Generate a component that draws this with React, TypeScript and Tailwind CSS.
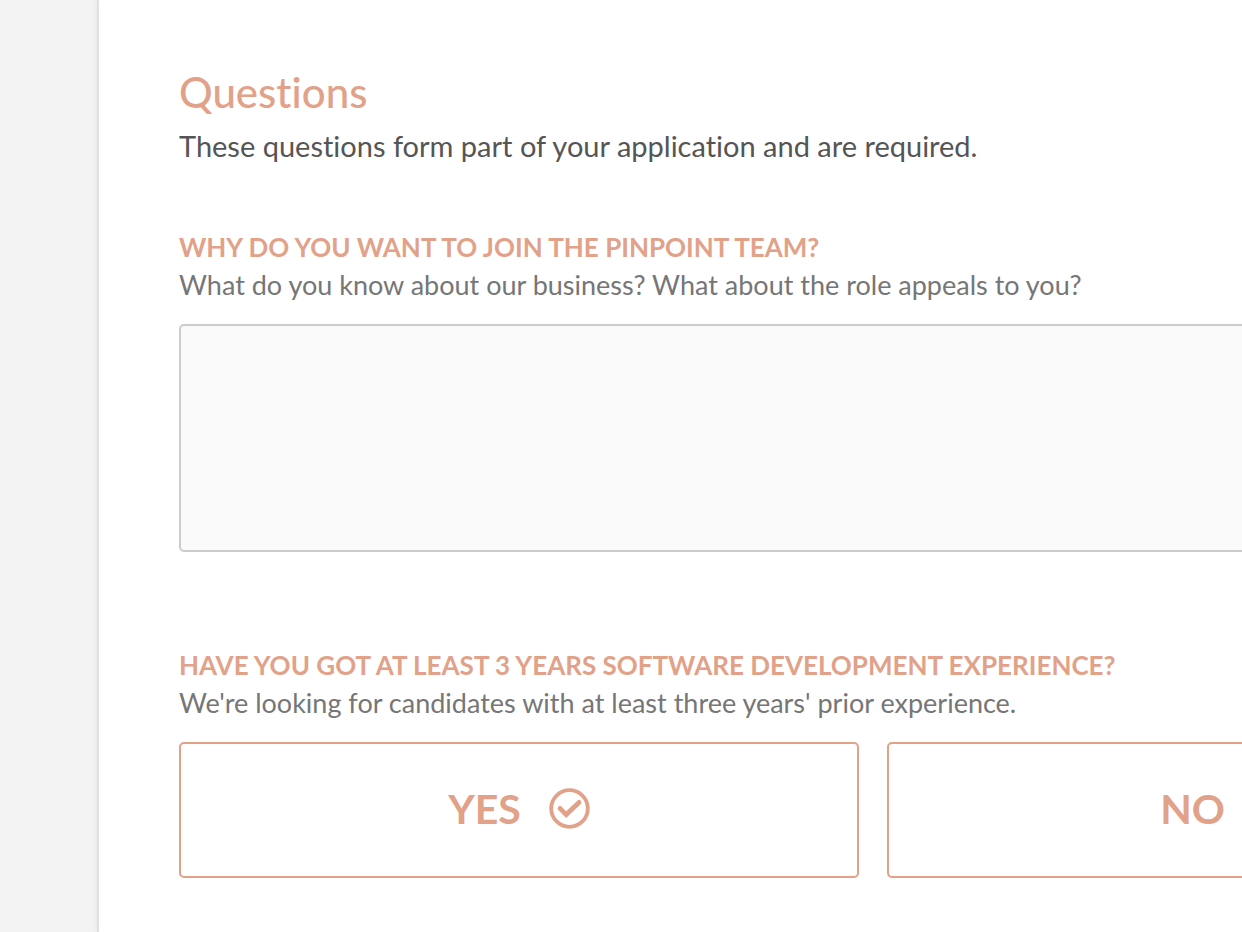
import { useState } from "react";

const ANSWERS = ["Yes", "No"];

const CheckIcon = () => (
  <svg width="41" height="41" viewBox="0 0 41 41" fill="none" stroke="currentColor" aria-hidden="true">
    <circle cx="20.5" cy="20.5" r="18.3" strokeWidth="3.8" />
    <path d="M11 20.4l6.2 6.2L30 14.4" strokeWidth="4.8" strokeLinecap="round" />
  </svg>
);

const CrossIcon = () => (
  <svg width="41" height="41" viewBox="0 0 41 41" fill="none" stroke="currentColor" aria-hidden="true">
    <circle cx="20.5" cy="20.5" r="18.3" strokeWidth="3.8" />
    <path d="M14 14l13 13M27 14L14 27" strokeWidth="4.8" strokeLinecap="round" />
  </svg>
);

export default function App() {
  const [reason, setReason] = useState("");
  const [answer, setAnswer] = useState("");

  return (
    <div className="min-h-screen overflow-hidden bg-[#f3f3f3] pl-[99px] font-['Lato',sans-serif] [font-variant-ligatures:none]">
      <main className="-mr-[405px] min-h-screen bg-white px-20 pt-[67px] pb-[54px] shadow-[0_0_0_2px_#e0e0e0,0_0_8px_rgba(0,0,0,0.12)]">
        <h1 className="text-[42px] leading-[50px] font-medium text-[#e2a189]">Questions</h1>
        <p className="mt-2 text-[29px] leading-[42px] whitespace-nowrap text-[#555555]">
          These questions form part of your application and are required.
        </p>

        <section className="mt-[61px]">
          <label htmlFor="reason" className="block text-[26px] leading-[38px] font-bold whitespace-nowrap text-[#e2a189] uppercase">
            Why do you want to join the Pinpoint team?
          </label>
          <p id="reason-hint" className="text-[27px] leading-[38px] whitespace-nowrap text-[#767676]">
            What do you know about our business? What about the role appeals to you?
          </p>
          <textarea
            id="reason"
            aria-describedby="reason-hint"
            value={reason}
            onChange={(e) => setReason(e.target.value)}
            className="mt-5 block h-[228px] w-full resize-none rounded-[5px] border-2 border-[#cccccc] bg-[#fafafa] p-4 text-[27px] outline-none"
          />
        </section>

        <section className="mt-[94px]">
          <h2 id="experience" className="text-[26px] leading-[38px] font-bold whitespace-nowrap text-[#e2a189] uppercase">
            Have you got at least 3 years software development experience?
          </h2>
          <p className="text-[27px] leading-[38px] whitespace-nowrap text-[#767676]">
            We're looking for candidates with at least three years' prior experience.
          </p>
          <div role="group" aria-labelledby="experience" className="mt-5 grid grid-cols-2 gap-7">
            {ANSWERS.map((name) => (
              <button
                key={name}
                type="button"
                aria-pressed={answer === name}
                onClick={() => setAnswer(name)}
                className="flex h-[136px] items-center justify-center gap-7 rounded-[5px] border-2 border-[#e2a189] pb-[3px] text-[41px] leading-[50px] font-bold text-[#e2a189] uppercase"
              >
                {name}
                {name === "Yes" ? <CheckIcon /> : <CrossIcon />}
              </button>
            ))}
          </div>
        </section>
      </main>
    </div>
  );
}
